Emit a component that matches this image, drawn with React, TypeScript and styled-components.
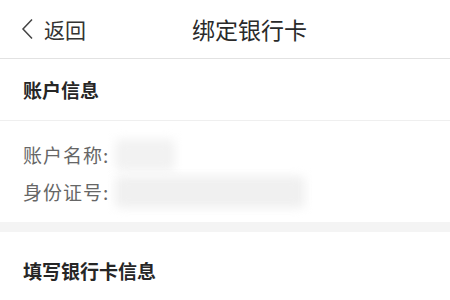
import React from "react";
import styled, { createGlobalStyle } from "styled-components";

const GlobalStyle = createGlobalStyle`
  html, body {
    margin: 0;
    padding: 0;
    background: #ffffff;
    font-family: "Noto Sans CJK SC", "Noto Sans", sans-serif;
  }
`;

const Page = styled.div`
  width: 450px;
  height: 300px;
  overflow: hidden;
  background: #ffffff;
`;

const Header = styled.div`
  height: 58px;
  display: flex;
  align-items: center;
  border-bottom: 1px solid #e2e2e2;
`;

const Back = styled.div`
  width: 192px;
  padding-left: 21px;
  box-sizing: border-box;
  display: flex;
  align-items: center;
  gap: 10px;
  font-size: 21px;
  color: #333333;
`;

const Title = styled.div`
  font-size: 23px;
  color: #2a2a2a;
`;

const SectionTitle = styled.div<{ h: number; line?: boolean }>`
  height: ${({ h }) => h}px;
  display: flex;
  align-items: center;
  padding-left: 23px;
  font-size: 19px;
  font-weight: 700;
  color: #262626;
  border-bottom: ${({ line }) => (line ? "1px solid #efefef" : "none")};
`;

const InfoBlock = styled.div`
  padding: 15px 0 12px 23px;
`;

const Row = styled.div`
  height: 37px;
  display: flex;
  align-items: center;
`;

const Label = styled.span`
  font-size: 19px;
  letter-spacing: 1px;
  color: #666666;
  width: 92px;
`;

const Masked = styled.div<{ w: number; tone: string }>`
  width: ${({ w }) => w}px;
  height: 32px;
  background: ${({ tone }) => tone};
  border-radius: 6px;
  filter: blur(5px);
`;

const Band = styled.div`
  height: 10px;
  background: #f4f4f4;
`;

const Chevron = () => (
  <svg width="13" height="22" viewBox="0 0 13 22">
    <path d="M11 1.5 L2 11 L11 20.5" fill="none" stroke="#444" strokeWidth="1.5" />
  </svg>
);

export default function App() {
  return (
    <Page>
      <GlobalStyle />
      <Header>
        <Back>
          <Chevron />
          <span>返回</span>
        </Back>
        <Title>绑定银行卡</Title>
      </Header>
      <SectionTitle h={61} line>账户信息</SectionTitle>
      <InfoBlock>
        <Row>
          <Label>账户名称:</Label>
          <Masked w={60} tone="#f2f2f2" />
        </Row>
        <Row>
          <Label>身份证号:</Label>
          <Masked w={190} tone="#f0f0f0" />
        </Row>
      </InfoBlock>
      <Band />
      <SectionTitle h={76}>填写银行卡信息</SectionTitle>
    </Page>
  );
}
